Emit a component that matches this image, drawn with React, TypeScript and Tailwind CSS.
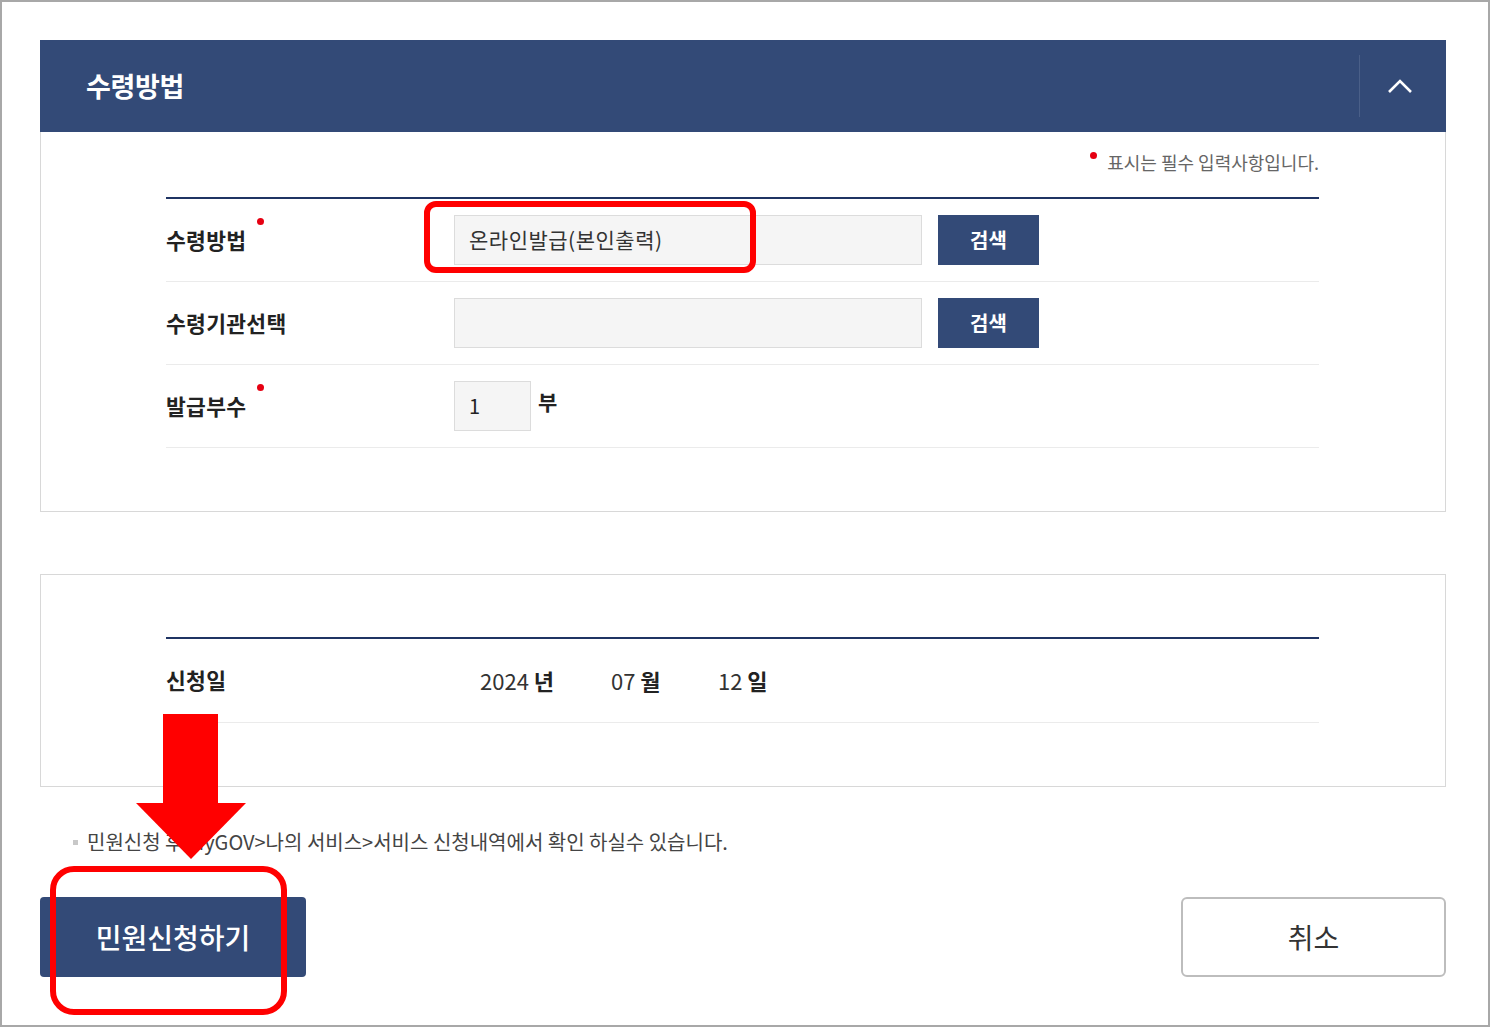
import React from 'react';

const font = { fontFamily: '"Noto Sans CJK KR", "Noto Sans", sans-serif' };

function Dot() {
  return <span className="absolute -top-[6px] -right-[18px] h-[7px] w-[7px] rounded-full bg-[#e60012]" />;
}

function Row({ label, required, children }: { label: string; required?: boolean; children?: React.ReactNode }) {
  return (
    <div className="flex h-[83px] items-center border-b border-[#ebebeb]">
      <div className="w-[288px] shrink-0">
        <span className="relative text-[21.5px] font-bold tracking-[0.3px] text-[#222]">
          {label}
          {required && <Dot />}
        </span>
      </div>
      <div className="flex flex-1 items-center">{children}</div>
    </div>
  );
}

function SearchButton() {
  return (
    <button className="ml-[16px] h-[50px] w-[101px] bg-[#334a77] text-[20px] font-bold text-white">검색</button>
  );
}

export default function App() {
  return (
    <div style={font} className="relative box-border h-[1027px] w-[1490px] overflow-hidden border-2 border-[#a8a8a8] bg-white pl-[38px] pr-[42px] pt-[38px]">
      {/* 수령방법 panel */}
      <div className="flex h-[92px] items-center justify-between bg-[#334a77]">
        <h2 className="pl-[46px] text-[27px] font-bold tracking-[-0.3px] text-white">수령방법</h2>
        <div className="flex h-[62px] w-[87px] items-center justify-center border-l border-[#4a5f88] pr-[6px]">
          <svg width="26" height="16" viewBox="0 0 26 16" fill="none">
            <polyline points="2,14 13,3 24,14" stroke="white" strokeWidth="2.6" />
          </svg>
        </div>
      </div>
      <div className="h-[380px] border-x border-b border-[#d8d8d8] pl-[125px] pr-[126px]">
        <div className="flex justify-end pt-[17px]">
          <span className="relative text-[18px] text-[#666]">
            <span className="absolute -left-[17px] top-[3px] h-[7px] w-[7px] rounded-full bg-[#e60012]" />
            표시는 필수 입력사항입니다.
          </span>
        </div>
        <div className="mt-[21px] border-t-2 border-[#1f3463]">
          <Row label="수령방법" required>
            <div className="flex h-[50px] w-[468px] items-center border border-[#dcdcdc] bg-[#f5f5f5] pl-[14px] text-[21px] tracking-[0.5px] text-[#333]">
              온라인발급(본인출력)
            </div>
            <SearchButton />
          </Row>
          <Row label="수령기관선택">
            <div className="h-[50px] w-[468px] border border-[#dcdcdc] bg-[#f5f5f5]" />
            <SearchButton />
          </Row>
          <Row label="발급부수" required>
            <div className="flex h-[50px] w-[77px] items-center border border-[#dcdcdc] bg-[#f5f5f5] pl-[14px] text-[20px] text-[#222]">
              1
            </div>
            <span className="mb-[8px] ml-[7px] text-[21px] font-bold text-[#222]">부</span>
          </Row>
        </div>
      </div>

      {/* 신청일 panel */}
      <div className="mt-[62px] h-[213px] border border-[#d8d8d8] pl-[125px] pr-[126px] pt-[62px]">
        <div className="border-t-2 border-[#1f3463]">
          <div className="flex h-[84px] items-center border-b border-[#ebebeb]">
            <div className="w-[288px] shrink-0 text-[21.5px] font-bold tracking-[0.3px] text-[#222]">신청일</div>
            <div className="flex items-center pl-[26px] text-[22px] text-[#333]">
              <span className="w-[131px]">2024 <b className="text-[#222]">년</b></span>
              <span className="w-[107px]">07 <b className="text-[#222]">월</b></span>
              <span>12 <b className="text-[#222]">일</b></span>
            </div>
          </div>
        </div>
      </div>

      <p className="mt-[40px] flex items-center pl-[33px] text-[20px] text-[#444]">
        <span className="mr-[9px] h-[5px] w-[5px] bg-[#c8c8c8]" />
        민원신청 후 MyGOV&gt;나의 서비스&gt;서비스 신청내역에서 확인 하실수 있습니다.
      </p>

      <div className="mt-[40px] flex justify-between">
        <button className="h-[80px] w-[266px] rounded-[4px] bg-[#334a77] text-[28px] font-medium text-white">민원신청하기</button>
        <button className="h-[80px] w-[265px] rounded-[6px] border-2 border-[#bdbdbd] bg-white text-[28px] text-[#333]">취소</button>
      </div>

      {/* annotations */}
      <div className="absolute left-[422px] top-[199px] h-[72px] w-[332px] rounded-[12px] border-[6px] border-[#ff0000]" />
      <div className="absolute left-[161px] top-[712px] h-[92px] w-[55px] bg-[#ff0000]" />
      <svg className="absolute left-[134px] top-[801px]" width="110" height="56" viewBox="0 0 110 56">
        <polygon points="0,0 110,0 55,56" fill="#ff0000" />
      </svg>
      <div className="absolute left-[48px] top-[864px] h-[149px] w-[237px] rounded-[24px] border-[6px] border-[#ff0000]" />
    </div>
  );
}
